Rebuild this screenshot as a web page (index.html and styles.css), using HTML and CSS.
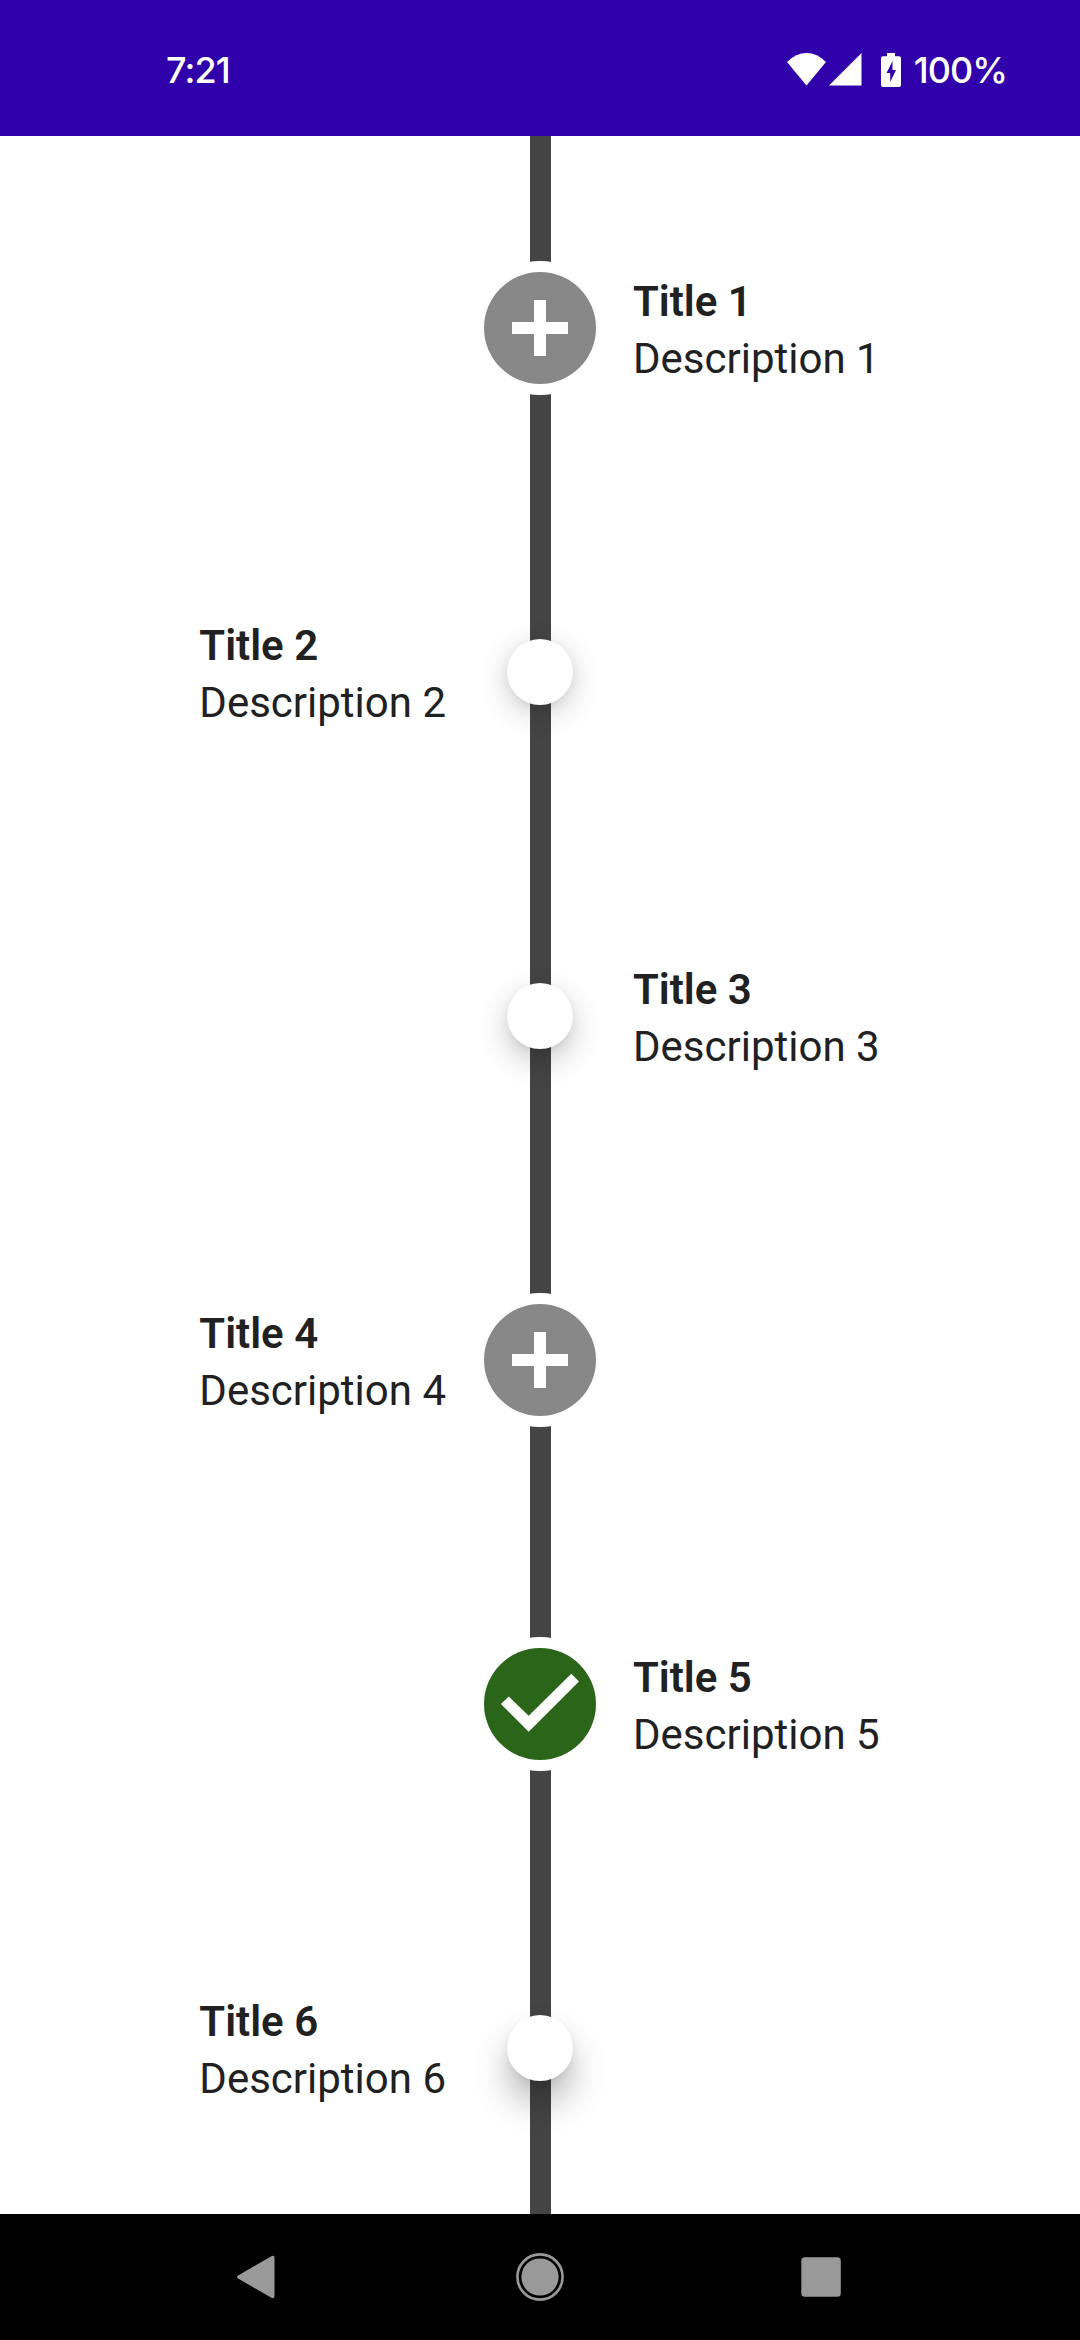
FILE: index.html
```html
<!DOCTYPE html>
<html lang="en">
<head>
<meta charset="utf-8">
<title>Timeline</title>
<link rel="stylesheet" href="styles.css">
</head>
<body>
<header class="status-bar">
  <span class="clock">7:21</span>
  <div class="status-icons">
    <svg class="wifi" width="40" height="34" viewBox="0 0 40 34"><path d="M0 9Q9 0 19.5 0T39 9L19.5 32.5Z"/></svg>
    <svg class="signal" width="33" height="34" viewBox="0 0 33 34"><path d="M0 32.6L32.5 0V32.6Z"/></svg>
    <svg class="battery" width="20" height="34" viewBox="0 0 20 34"><path fill-rule="evenodd" d="M6 0H14V3.3H18Q20 3.3 20 5.3V32Q20 34 18 34H2Q0 34 0 32V5.3Q0 3.3 2 3.3H6ZM11.5 8L5.5 20H9.2V29L15 17H11.5Z"/></svg>
    <span class="level">100%</span>
  </div>
</header>
<main class="timeline">
  <section class="row">
    <div class="text end"><h2>Title 1</h2><p>Description 1</p></div>
    <div class="marker badge"><svg width="112" height="112"><path d="M50 28H62V50H84V62H62V84H50V62H28V50H50Z"/></svg></div>
  </section>
  <section class="row">
    <div class="text start"><h2>Title 2</h2><p>Description 2</p></div>
    <div class="marker dot dot-high"></div>
  </section>
  <section class="row">
    <div class="text end"><h2>Title 3</h2><p>Description 3</p></div>
    <div class="marker dot dot-mid"></div>
  </section>
  <section class="row">
    <div class="text start"><h2>Title 4</h2><p>Description 4</p></div>
    <div class="marker badge"><svg width="112" height="112"><path d="M50 28H62V50H84V62H62V84H50V62H28V50H50Z"/></svg></div>
  </section>
  <section class="row">
    <div class="text end"><h2>Title 5</h2><p>Description 5</p></div>
    <div class="marker badge done"><svg width="112" height="112"><path d="M17 56L24.7 48.4L44.7 67.8L87.3 25.7L95 33.4L44.7 83.7Z"/></svg></div>
  </section>
  <section class="row">
    <div class="text start"><h2>Title 6</h2><p>Description 6</p></div>
    <div class="marker dot dot-low"></div>
  </section>
</main>
<nav class="nav-bar">
  <svg width="48" height="48" viewBox="3.5 0 48 48"><path d="M7 22.2L39.5 3.4Q43 1.8 43 5V43Q43 46.2 39.5 44.6L7 25.8Q3.8 24 7 22.2Z"/></svg>
  <svg width="48" height="48" viewBox="0 0 48 48"><circle cx="24" cy="24" r="18.6"/><circle class="ring" cx="24" cy="24" r="22.6"/></svg>
  <svg width="48" height="48" viewBox="0 0 48 48"><rect x="4.3" y="4.2" width="39.5" height="39.6" rx="3.5"/></svg>
</nav>
</body>
</html>
```

FILE: styles.css
```css
* { box-sizing: border-box; }

body {
  margin: 0;
  width: 1080px;
  height: 2340px;
  display: flex;
  flex-direction: column;
  overflow: hidden;
  background: #fff;
  font-family: Roboto, sans-serif;
}

svg { display: block; }

.status-bar {
  height: 136px;
  flex: none;
  display: flex;
  justify-content: space-between;
  align-items: flex-start;
  padding: 53px 73px 0 166px;
  background: #3000ab;
  color: #fff;
  fill: #fff;
  font: 500 36px/34px Inter, sans-serif;
}

.clock { letter-spacing: -0.9px; }
.status-icons { display: flex; }
.signal { margin-left: 2px; }
.battery { margin-left: 19px; }
.level { margin-left: 13px; letter-spacing: -1px; }

.timeline {
  flex: 1;
  min-height: 0;
  overflow: hidden;
  padding-top: 20px;
  background: linear-gradient(#444, #444) center / 21px 100% no-repeat;
}

.row {
  height: 344px;
  display: grid;
  grid-template-columns: 448px 184px 448px;
  align-items: center;
}

.text {
  grid-row: 1;
  padding-top: 3px;
  color: #212121;
  font-size: 42px;
  line-height: 57px;
}

.text h2, .text p { margin: 0; font-size: inherit; }
.text h2 { font-weight: 600; }
.start { grid-column: 1; justify-self: end; padding-right: 2px; }
.end { grid-column: 3; padding-left: 1px; }

.marker {
  grid-column: 2;
  grid-row: 1;
  justify-self: center;
  border-radius: 50%;
}

.badge {
  background: #888;
  box-shadow: 0 0 0 11px #fff;
  fill: #fff;
}

.done { background: #2b6519; }

.dot { width: 66px; height: 66px; background: #fff; }
.dot-high { box-shadow: 0 8px 30px rgba(0, 0, 0, 0.2), 0 2px 8px rgba(0, 0, 0, 0.06); }
.dot-mid { box-shadow: 0 12px 30px rgba(0, 0, 0, 0.22), 0 2px 8px rgba(0, 0, 0, 0.06); }
.dot-low { box-shadow: 0 22px 34px rgba(0, 0, 0, 0.28), 0 3px 8px rgba(0, 0, 0, 0.06); }

.nav-bar {
  height: 126px;
  flex: none;
  display: flex;
  justify-content: space-between;
  align-items: center;
  padding: 0 235px;
  background: #000;
  fill: #999;
}

.ring { fill: none; stroke: #999; stroke-width: 2.6; }
```
